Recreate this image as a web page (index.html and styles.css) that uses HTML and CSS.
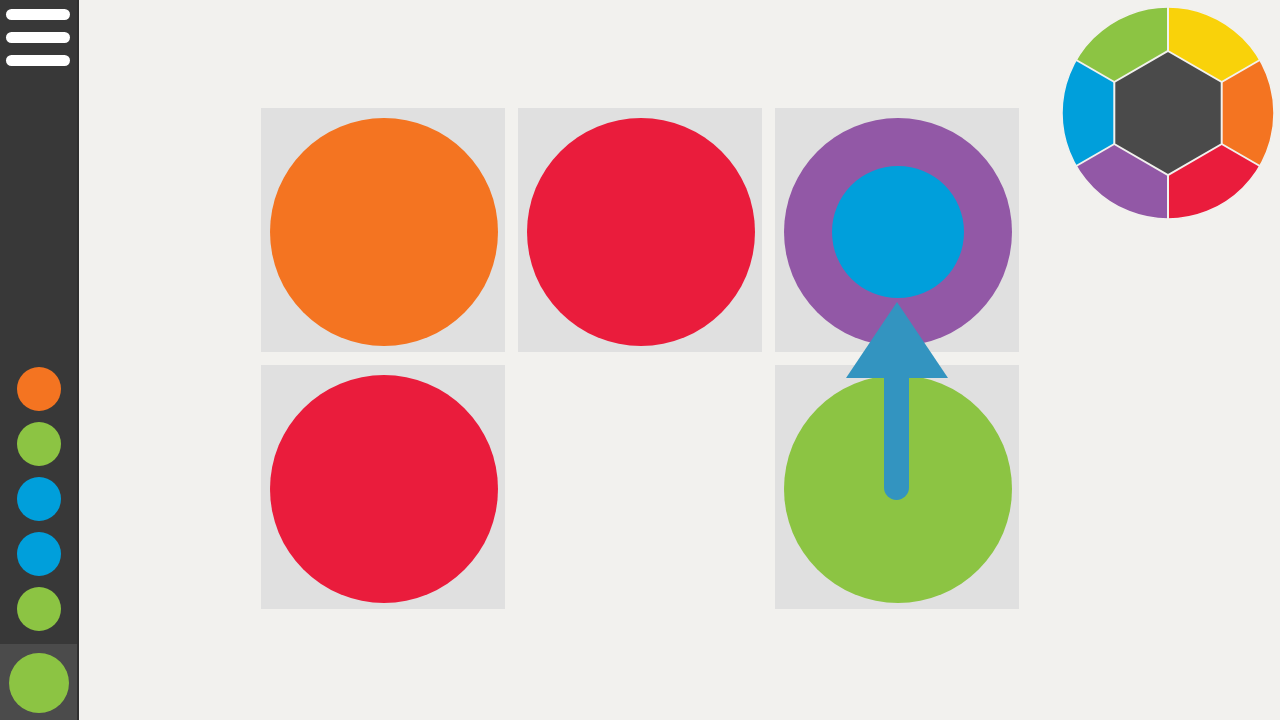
FILE: index.html
```html
<!DOCTYPE html>
<html>
<head>
<meta charset="utf-8">
<link rel="stylesheet" href="styles.css">
</head>
<body>
<div class="app">
  <aside class="sidebar">
    <div class="menu">
      <span class="bar"></span>
      <span class="bar"></span>
      <span class="bar"></span>
    </div>
    <div class="queue">
      <span class="dot orange"></span>
      <span class="dot green"></span>
      <span class="dot blue"></span>
      <span class="dot blue"></span>
      <span class="dot green"></span>
    </div>
    <div class="current">
      <span class="big-dot green"></span>
    </div>
  </aside>
  <main class="board">
    <div class="grid">
      <div class="cell"><span class="disc orange"></span></div>
      <div class="cell"><span class="disc red"></span></div>
      <div class="cell"><span class="disc purple"><span class="inner blue"></span></span></div>
      <div class="cell"><span class="disc red"></span></div>
      <div class="cell empty"></div>
      <div class="cell"><span class="disc green"></span></div>
      <svg class="arrow" width="102" height="200" viewBox="0 0 102 200">
        <rect x="38" y="60" width="25" height="138" rx="12.5" fill="#3394c0"/>
        <polygon points="51,0 102,76 0,76" fill="#3394c0"/>
      </svg>
    </div>
    <svg class="wheel" width="216" height="216" viewBox="-108 -108 216 216">
      <circle r="106" fill="#f2f1ee"/>
      <path d="M0,0 L0,-106 A106,106 0 0 1 91.8,-53 Z" fill="#f9d20a"/>
      <path d="M0,0 L91.8,-53 A106,106 0 0 1 91.8,53 Z" fill="#f47421"/>
      <path d="M0,0 L91.8,53 A106,106 0 0 1 0,106 Z" fill="#ea1c3c"/>
      <path d="M0,0 L0,106 A106,106 0 0 1 -91.8,53 Z" fill="#9258a6"/>
      <path d="M0,0 L-91.8,53 A106,106 0 0 1 -91.8,-53 Z" fill="#009fdb"/>
      <path d="M0,0 L-91.8,-53 A106,106 0 0 1 0,-106 Z" fill="#8cc443"/>
      <g stroke="#f2f1ee" stroke-width="2">
        <line x1="0" y1="0" x2="0" y2="-107"/>
        <line x1="0" y1="0" x2="92.7" y2="-53.5"/>
        <line x1="0" y1="0" x2="92.7" y2="53.5"/>
        <line x1="0" y1="0" x2="0" y2="107"/>
        <line x1="0" y1="0" x2="-92.7" y2="53.5"/>
        <line x1="0" y1="0" x2="-92.7" y2="-53.5"/>
      </g>
      <polygon points="0,-62 53.7,-31 53.7,31 0,62 -53.7,31 -53.7,-31" fill="#4a4a4a" stroke="#f2f1ee" stroke-width="2"/>
      <circle r="106" fill="none" stroke="#f2f1ee" stroke-width="1.5"/>
    </svg>
  </main>
</div>
</body>
</html>
```
FILE: styles.css
```css
* { box-sizing: border-box; }
html, body {
  margin: 0;
  padding: 0;
  width: 1280px;
  height: 720px;
  overflow: hidden;
  background: #f2f1ee;
  font-family: "Liberation Sans", Arial, sans-serif;
}
.app {
  display: flex;
  width: 1280px;
  height: 720px;
}
.sidebar {
  width: 79px;
  height: 720px;
  background: #383838;
  border-right: 2px solid #2f2f2f;
  display: flex;
  flex-direction: column;
  flex-shrink: 0;
}
.menu {
  display: flex;
  flex-direction: column;
  gap: 12px;
  padding: 9px 0 0 6px;
}
.bar {
  display: block;
  width: 64px;
  height: 11px;
  border-radius: 6px;
  background: #ffffff;
}
.queue {
  margin-top: auto;
  margin-bottom: 13px;
  display: flex;
  flex-direction: column;
  align-items: center;
  gap: 11px;
  padding-left: 1px;
}
.dot {
  display: block;
  width: 44px;
  height: 44px;
  border-radius: 50%;
}
.current {
  height: 76px;
  background: #4b4b4b;
  display: flex;
  align-items: center;
  justify-content: center;
  padding: 2px 0 0 1px;
}
.big-dot {
  display: block;
  width: 60px;
  height: 60px;
  border-radius: 50%;
}
.orange { background: #f47421; }
.red { background: #ea1c3c; }
.green { background: #8cc443; }
.blue { background: #009fdb; }
.purple { background: #9258a6; }

.board {
  flex: 1;
  position: relative;
  padding: 108px 0 0 182px;
}
.grid {
  position: relative;
  display: grid;
  grid-template-columns: repeat(3, 244px);
  grid-template-rows: repeat(2, 244px);
  gap: 13px;
  width: max-content;
}
.cell {
  background: #e0e0e0;
  display: flex;
  align-items: center;
  justify-content: center;
  padding: 3px 0 0 2px;
}
.cell.empty { background: transparent; }
.disc {
  display: flex;
  align-items: center;
  justify-content: center;
  width: 228px;
  height: 228px;
  border-radius: 50%;
}
.inner {
  display: block;
  width: 132px;
  height: 132px;
  border-radius: 50%;
}
.arrow {
  position: absolute;
  left: 585px;
  top: 194px;
}
.wheel {
  position: absolute;
  top: 5px;
  right: 4px;
}
```
